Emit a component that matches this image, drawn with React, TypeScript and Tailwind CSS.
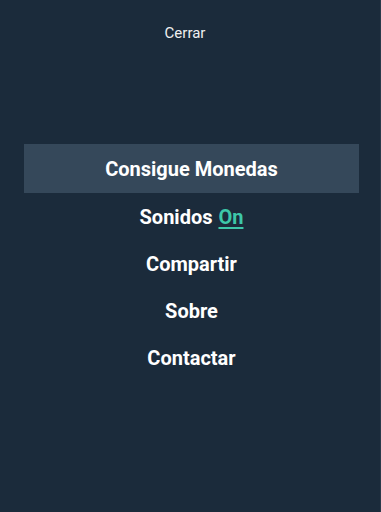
export default function App() {
  const items = ["Consigue Monedas", "Sonidos", "Compartir", "Sobre", "Contactar"];
  return (
    <div className="h-[512px] w-[381px] border-r border-[#2a3a4a] bg-[#1b2b3b] font-['Roboto',sans-serif] text-white">
      <div className="flex justify-center pr-[10px] pt-[25px]">
        <button className="text-[15px] leading-[17px] text-[#f0f0f0]">Cerrar</button>
      </div>
      <ul className="ml-[24px] mt-[102px] flex w-[335px] flex-col">
        {items.map((label, i) => (
          <li
            key={label}
            className={`flex items-center justify-center text-[20px] font-bold ${
              i === 0 ? "h-[49px] bg-[#35485a]" : "h-[47px]"
            }`}
          >
            {label}
            {label === "Sonidos" && (
              <span className="ml-[6px] text-[#3dc7a9] underline underline-offset-[3px]">On</span>
            )}
          </li>
        ))}
      </ul>
    </div>
  );
}
